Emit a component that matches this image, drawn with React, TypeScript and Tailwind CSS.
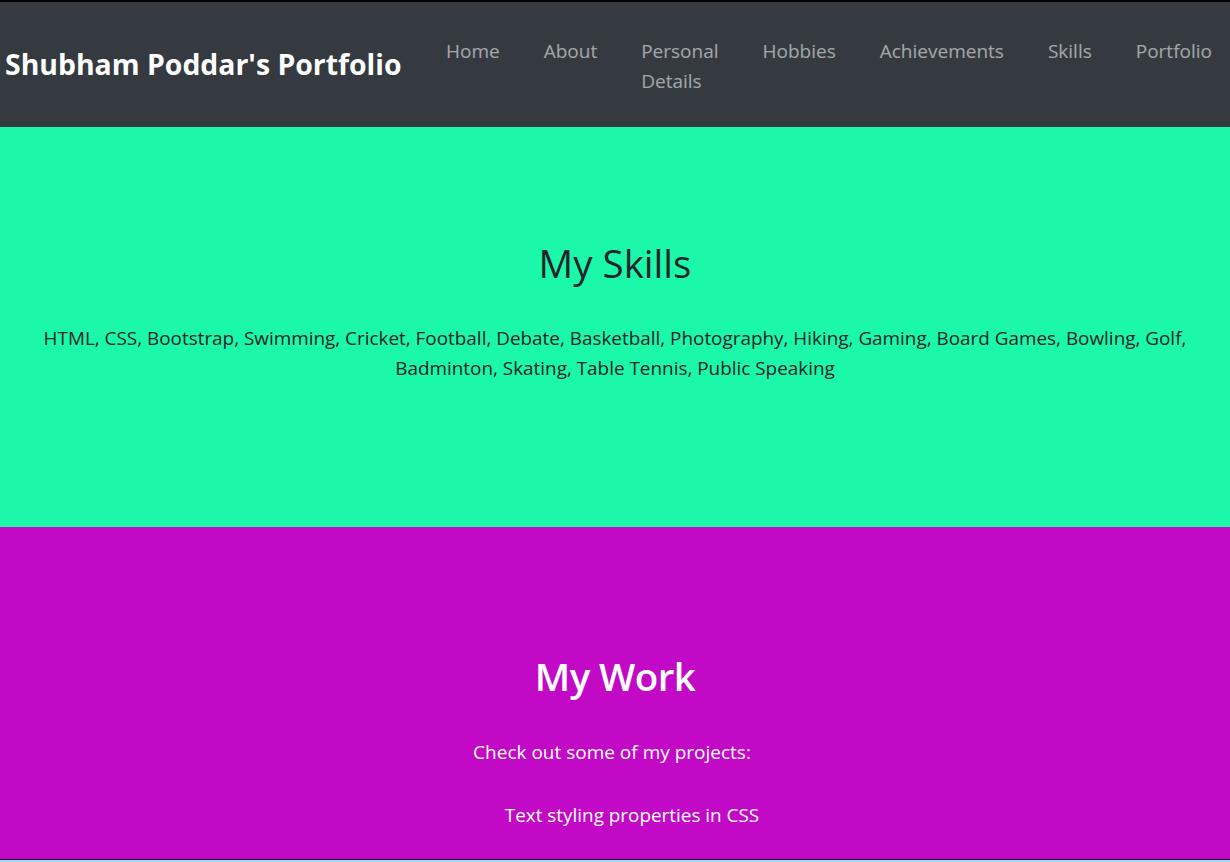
import React from 'react';

const links = ['Home', 'About', 'Personal Details', 'Hobbies', 'Achievements', 'Skills', 'Portfolio'];

const font = { fontFamily: '"Open Sans", "Noto Sans", sans-serif' };

export default function App() {
    return (
        <div className="w-[1230px] min-h-[862px] bg-white" style={font}>
            <nav className="h-[127px] bg-[#343a40] border-t-2 border-black flex items-center justify-between pl-[5px] pr-[18px]">
                <a className="text-[28.4px] font-bold text-white leading-none">Shubham Poddar's Portfolio</a>
                <ul className="flex items-start gap-[44px] mt-[2px]">
                    {links.map(l => (
                        <li key={l}>
                            <a className="block text-[19px] leading-[30px] text-white/55 whitespace-pre-line">
                                {l === 'Personal Details' ? 'Personal\nDetails' : l}
                            </a>
                        </li>
                    ))}
                </ul>
            </nav>

            <section className="h-[400px] bg-[#1bf8a9] text-[#212529] text-center flex flex-col items-center pt-[112px]">
                <h2 className="text-[38.5px] leading-[48px] font-medium">My Skills</h2>
                <p className="mt-[36px] text-[18.9px] leading-[30px] px-[30px]">
                    HTML, CSS, Bootstrap, Swimming, Cricket, Football, Debate, Basketball, Photography, Hiking, Gaming, Board Games, Bowling, Golf, Badminton, Skating, Table Tennis, Public Speaking
                </p>
            </section>

            <section className="h-[333px] bg-[#c209c6] text-white text-center flex flex-col items-center pt-[125px] border-b border-[#1a1a2e]">
                <h2 className="text-[38.5px] leading-[48px] font-semibold tracking-[-0.6px]">My Work</h2>
                <p className="mt-[37px] text-[19px] leading-[30px] pr-[6px]">Check out some of my projects:</p>
                <ul className="mt-[33px] pl-[34px]">
                    <li className="text-[18.9px] leading-[30px]">Text styling properties in CSS</li>
                </ul>
            </section>
            <div className="h-[2px] bg-[#9fd8f0]"></div>
        </div>
    );
}
